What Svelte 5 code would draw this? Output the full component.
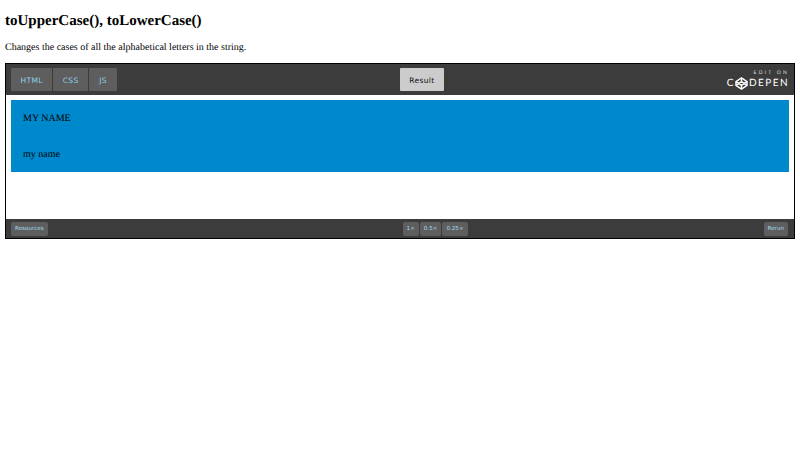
<script>
    const tabs = ["HTML", "CSS", "JS"];
    const zooms = ["1×", "0.5×", "0.25×"];
</script>

<main class="page">
    <h2>toUpperCase(), toLowerCase()</h2>
    <p class="intro">Changes the cases of all the alphabetical letters in the string.</p>

    <section class="embed">
        <header class="top">
            <nav class="tabs">
                {#each tabs as tab}
                    <span class="tab">{tab}</span>
                {/each}
            </nav>
            <span class="result">Result</span>
            <div class="logo">
                <span class="edit">EDIT ON</span>
                <span class="word">
                    C<svg class="mark" viewBox="0 0 20 20" width="13" height="13">
                        <path d="M10 1.5 18.5 7v6L10 18.5 1.5 13V7Z" fill="none" stroke="#fff" stroke-width="2.2" stroke-linejoin="round" />
                        <path d="M10 1.5V7M10 13v5.5M1.5 7 10 13l8.5-6M1.5 13 10 7l8.5 6" fill="none" stroke="#fff" stroke-width="2.2" />
                    </svg>DEPEN
                </span>
            </div>
        </header>

        <div class="output">
            <div class="blue">
                <p>MY NAME</p>
                <p>my name</p>
            </div>
        </div>

        <footer class="bottom">
            <span class="small">Resources</span>
            <div class="zooms">
                {#each zooms as zoom}
                    <span class="small">{zoom}</span>
                {/each}
            </div>
            <span class="small rerun">Rerun</span>
        </footer>
    </section>
</main>

<style>
    :global(body) {
        margin: 0;
        background: #fff;
        color: #000;
        font-family: "Liberation Serif", serif;
        text-rendering: geometricPrecision;
    }
    .page {
        padding: 0 5px;
    }
    h2 {
        margin: 0;
        padding-top: 13px;
        font-size: 15px;
        line-height: 17px;
    }
    .intro {
        margin: 12px 0 0;
        font-size: 10px;
        line-height: 12px;
    }
    .embed {
        margin-top: 9px;
        height: 176px;
        box-sizing: border-box;
        border: 1px solid #000;
        display: flex;
        flex-direction: column;
    }
    .top {
        height: 31px;
        flex: none;
        background: #3c3c3c;
        display: flex;
        justify-content: space-between;
        align-items: center;
        padding: 0 5px;
    }
    .tabs {
        display: flex;
        gap: 1px;
    }
    .tab {
        height: 23px;
        min-width: 28px;
        box-sizing: border-box;
        padding: 1px 9.5px 0;
        display: flex;
        align-items: center;
        justify-content: center;
        background: #5e5e5e;
        border-radius: 1px;
        color: #8ecfe6;
        font: 7.5px "DejaVu Sans", sans-serif;
        letter-spacing: 0.35px;
    }
    .result {
        width: 44px;
        height: 23px;
        box-sizing: border-box;
        padding-top: 1px;
        display: flex;
        align-items: center;
        justify-content: center;
        background: #ccc;
        border-radius: 1px;
        color: #111;
        font: 7.5px "DejaVu Sans", sans-serif;
        letter-spacing: 0.35px;
    }
    .logo {
        display: flex;
        flex-direction: column;
        align-items: flex-end;
        color: #fff;
        font-family: "Lato", sans-serif;
    }
    .edit {
        font-size: 5px;
        line-height: 7px;
        letter-spacing: 2.2px;
        color: #ddd;
    }
    .word {
        display: flex;
        align-items: center;
        font-size: 10px;
        line-height: 13px;
        letter-spacing: 1.45px;
    }
    .mark {
        margin: 0 1px 0 0;
    }
    .output {
        flex: 1;
        background: #fff;
        padding: 5px;
    }
    .blue {
        height: 72px;
        box-sizing: border-box;
        background: #0088cc;
        padding: 13px 12px 0;
        font-size: 10px;
    }
    .blue p {
        margin: 0 0 24px;
        line-height: 12px;
    }
    .bottom {
        height: 19px;
        flex: none;
        background: #3c3c3c;
        display: flex;
        align-items: center;
        padding: 0 6px 0 5px;
    }
    .zooms {
        display: flex;
        gap: 1px;
        margin-left: 355px;
    }
    .rerun {
        margin-left: auto;
        padding: 0 4.4px;
    }
    .small {
        height: 14px;
        padding: 0 4px;
        display: flex;
        align-items: center;
        background: #5e5e5e;
        border-radius: 2px;
        color: #a5dcf0;
        font: 5.6px "DejaVu Sans", sans-serif;
    }
</style>
